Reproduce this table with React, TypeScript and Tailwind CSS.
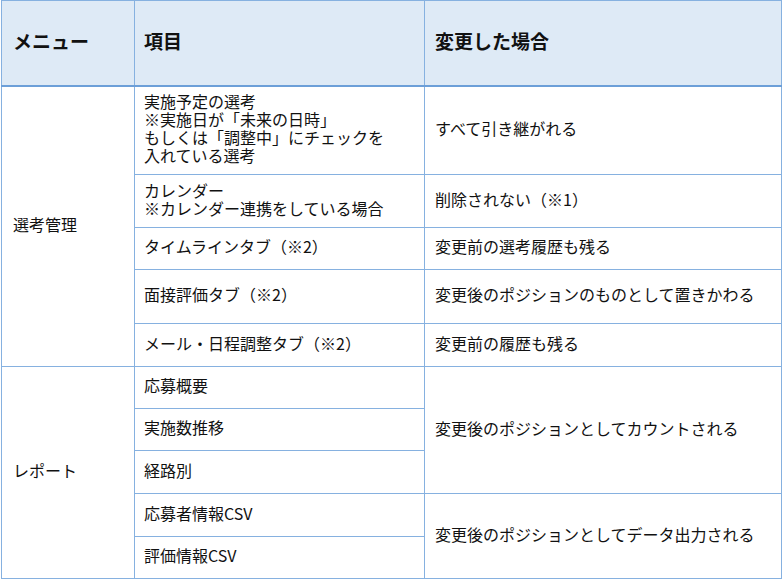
const font = { fontFamily: '"Noto Sans CJK JP", "Noto Sans", sans-serif' };

type Row = { item: string[]; h: number };

const senkou: Row[] = [
  { item: ["実施予定の選考", "※実施日が「未来の日時」", "もしくは「調整中」にチェックを", "入れている選考"], h: 89 },
  { item: ["カレンダー", "※カレンダー連携をしている場合"], h: 53 },
  { item: ["タイムラインタブ（※2）"], h: 42 },
  { item: ["面接評価タブ（※2）"], h: 54 },
  { item: ["メール・日程調整タブ（※2）"], h: 43 },
];

const senkouResult = [
  "すべて引き継がれる",
  "削除されない（※1）",
  "変更前の選考履歴も残る",
  "変更後のポジションのものとして置きかわる",
  "変更前の履歴も残る",
];

const cell = "border border-[#86b1e0] px-[9px] pt-0 pb-[5px] align-middle text-[16px] leading-[18px] text-[#111]";
const head = "border border-[#86b1e0] border-b-2 border-b-[#6c9fd8] pt-0 pb-[4px] align-middle text-left text-[19px] font-bold text-[#111]";

export default function App() {
  return (
    <div className="w-[783px] h-[581px] bg-white" style={font}>
      <table className="table-fixed border-collapse w-[781px] ml-px">
        <colgroup>
          <col className="w-[133px]" />
          <col className="w-[290px]" />
          <col />
        </colgroup>
        <thead>
          <tr className="h-[85px] bg-[#deeaf6]">
            <th className={`${head} pl-[11px]`}>メニュー</th>
            <th className={`${head} pl-[9px]`}>項目</th>
            <th className={`${head} pl-[10px]`}>変更した場合</th>
          </tr>
        </thead>
        <tbody>
          {senkou.map((r, i) => (
            <tr key={i} style={{ height: r.h }}>
              {i === 0 && (
                <td rowSpan={5} className={`${cell} pl-[11px]`}>
                  選考管理
                </td>
              )}
              <td className={cell}>
                {r.item.map((t) => (
                  <div key={t}>{t}</div>
                ))}
              </td>
              <td className={`${cell} pl-[10px]`}>{senkouResult[i]}</td>
            </tr>
          ))}
          <tr className="h-[42px]">
            <td rowSpan={5} className={`${cell} pl-[11px]`}>
              レポート
            </td>
            <td className={cell}>応募概要</td>
            <td rowSpan={3} className={`${cell} pl-[10px]`}>
              変更後のポジションとしてカウントされる
            </td>
          </tr>
          <tr className="h-[42px]">
            <td className={cell}>実施数推移</td>
          </tr>
          <tr className="h-[43px]">
            <td className={cell}>経路別</td>
          </tr>
          <tr className="h-[43px]">
            <td className={cell}>応募者情報CSV</td>
            <td rowSpan={2} className={`${cell} pl-[10px]`}>
              変更後のポジションとしてデータ出力される
            </td>
          </tr>
          <tr className="h-[42px]">
            <td className={cell}>評価情報CSV</td>
          </tr>
        </tbody>
      </table>
    </div>
  );
}
